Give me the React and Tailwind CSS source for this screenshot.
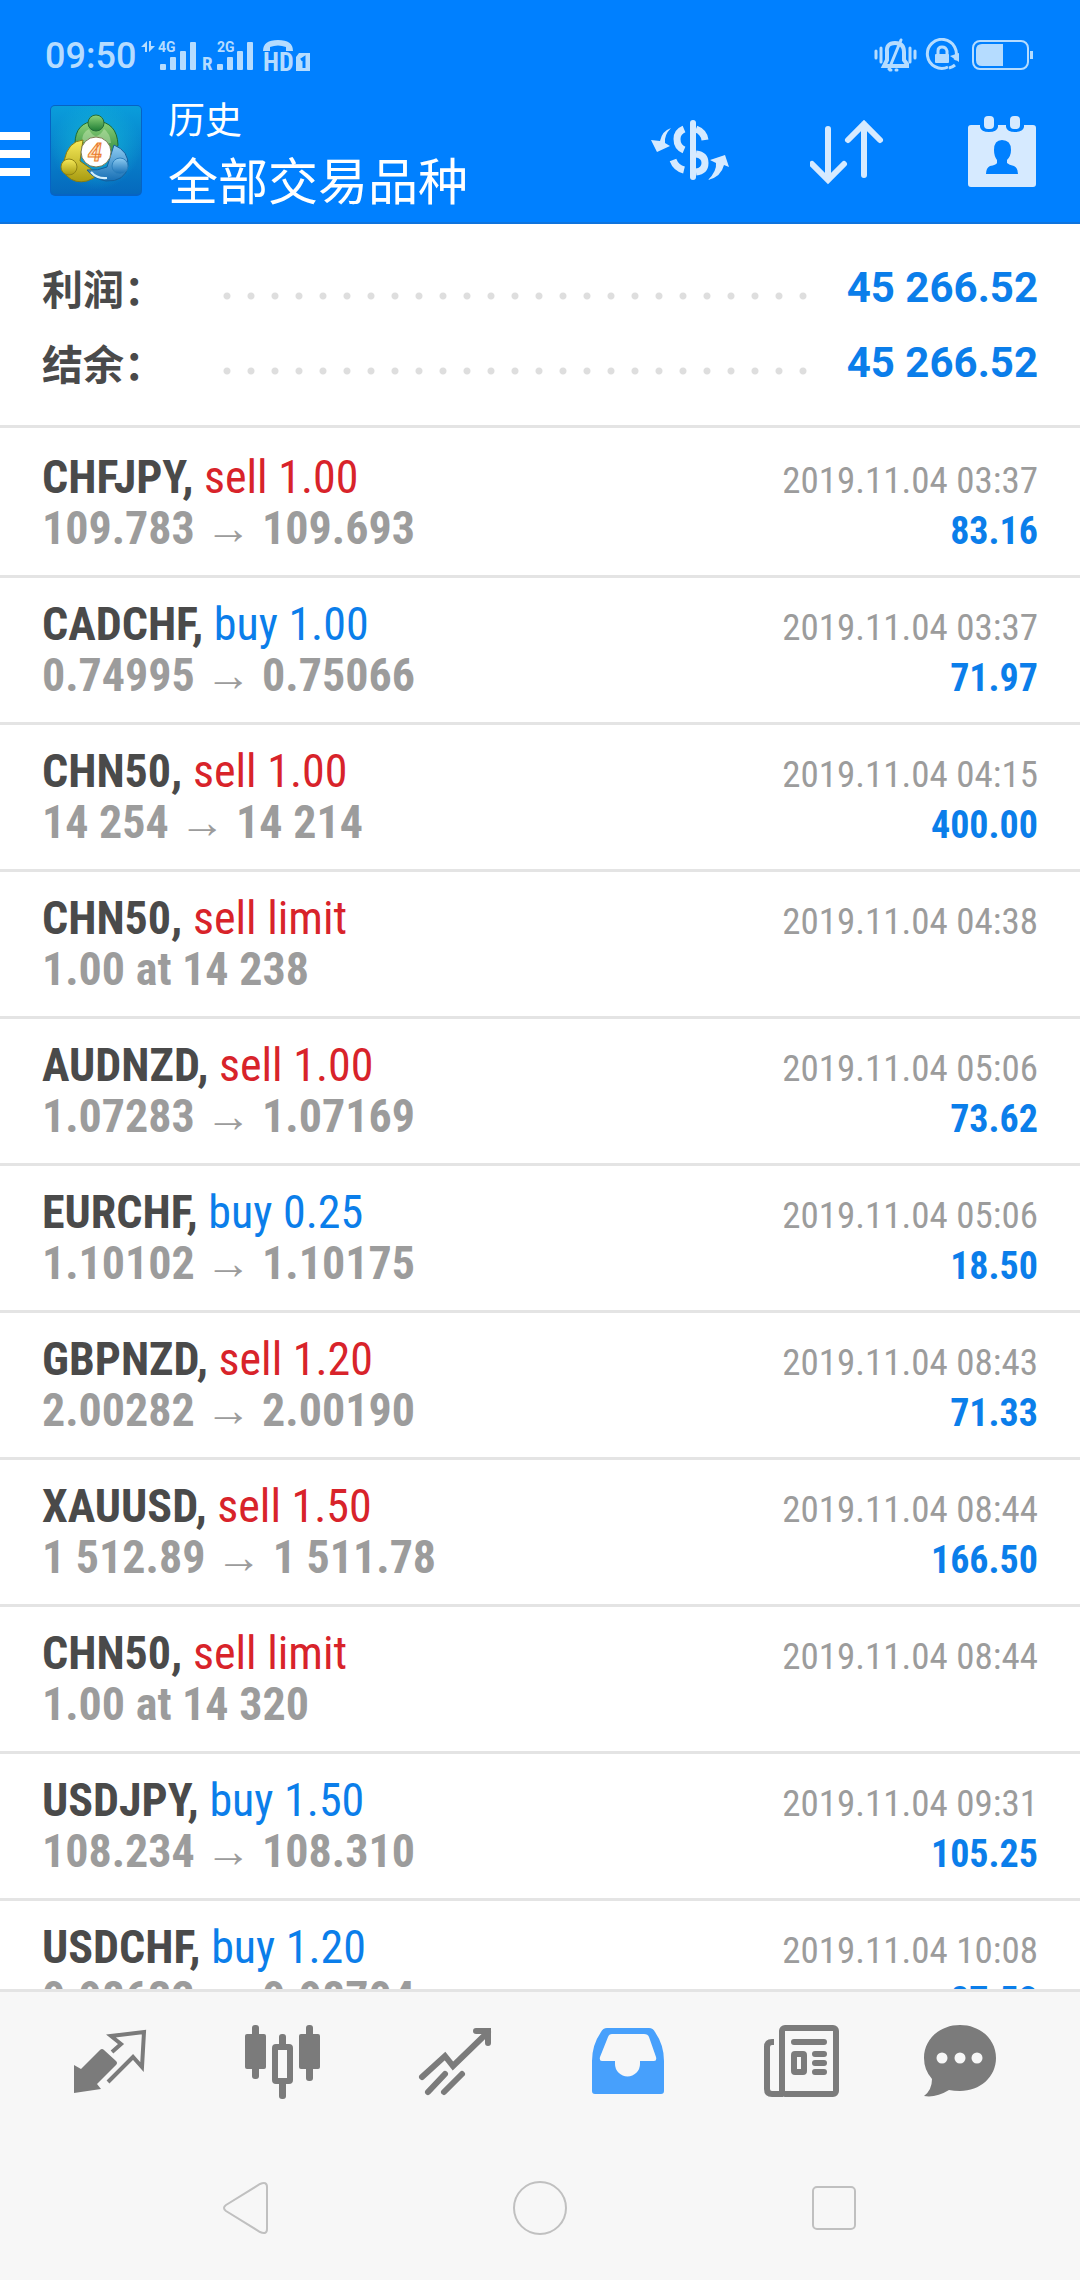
const trades = [
  { symbol: 'CHFJPY', side: 'sell', type: 'sell 1.00', from: '109.783', to: '109.693', time: '2019.11.04 03:37', profit: '83.16' },
  { symbol: 'CADCHF', side: 'buy', type: 'buy 1.00', from: '0.74995', to: '0.75066', time: '2019.11.04 03:37', profit: '71.97' },
  { symbol: 'CHN50', side: 'sell', type: 'sell 1.00', from: '14 254', to: '14 214', time: '2019.11.04 04:15', profit: '400.00' },
  { symbol: 'CHN50', side: 'sell', type: 'sell limit', order: '1.00 at 14 238', time: '2019.11.04 04:38' },
  { symbol: 'AUDNZD', side: 'sell', type: 'sell 1.00', from: '1.07283', to: '1.07169', time: '2019.11.04 05:06', profit: '73.62' },
  { symbol: 'EURCHF', side: 'buy', type: 'buy 0.25', from: '1.10102', to: '1.10175', time: '2019.11.04 05:06', profit: '18.50' },
  { symbol: 'GBPNZD', side: 'sell', type: 'sell 1.20', from: '2.00282', to: '2.00190', time: '2019.11.04 08:43', profit: '71.33' },
  { symbol: 'XAUUSD', side: 'sell', type: 'sell 1.50', from: '1 512.89', to: '1 511.78', time: '2019.11.04 08:44', profit: '166.50' },
  { symbol: 'CHN50', side: 'sell', type: 'sell limit', order: '1.00 at 14 320', time: '2019.11.04 08:44' },
  { symbol: 'USDJPY', side: 'buy', type: 'buy 1.50', from: '108.234', to: '108.310', time: '2019.11.04 09:31', profit: '105.25' },
  { symbol: 'USDCHF', side: 'buy', type: 'buy 1.20', from: '0.98632', to: '0.98704', time: '2019.11.04 10:08', profit: '87.53' },
]

const summary = [
  { label: '利润：', value: '45 266.52' },
  { label: '结余：', value: '45 266.52' },
]

/* ── Status bar ── */
function SignalIcons() {
  return (
    <svg className="w-[172px] h-[42px]" viewBox="0 -4 172 42" fill="currentColor" aria-hidden="true">
      <path d="M1 8l6-6v11h-2V8zM9 2v11l6-6h-4V2z" />
      <text x="18" y="13" fontFamily="Roboto" fontSize="14" fontWeight="700">4G</text>
      <rect x="20" y="25" width="6" height="6" rx="1" />
      <rect x="30" y="18" width="6" height="13" rx="1" />
      <rect x="40" y="12" width="6" height="19" rx="1" />
      <rect x="50" y="3" width="6" height="28" rx="1" />
      <text x="62" y="31" fontFamily="Roboto Condensed" fontSize="19" fontWeight="700">R</text>
      <text x="77" y="13" fontFamily="Roboto" fontSize="14" fontWeight="700">2G</text>
      <rect x="77" y="25" width="6" height="6" rx="1" />
      <rect x="87" y="18" width="6" height="13" rx="1" />
      <rect x="97" y="12" width="6" height="19" rx="1" />
      <rect x="107" y="3" width="6" height="28" rx="1" />
      <path d="M123 12Q123 1 138 1T153 12H146V8Q138 5 130 8V12Z" />
      <text x="123" y="32" fontFamily="Roboto Condensed" fontSize="26" fontWeight="700">HD</text>
      <path d="M159 14h11v18h-14V18z" />
      <path d="M161 21l3-2v10" fill="none" stroke="#0080ff" strokeWidth="3" />
    </svg>
  )
}

function DeviceIcons() {
  return (
    <svg className="w-[160px] h-[36px]" viewBox="0 0 160 36" fill="none" stroke="currentColor" aria-hidden="true">
      <g strokeWidth="3" strokeLinecap="round">
        <path d="M2 13v7M7 10v14M41 13v7M36 10v14" />
        <path d="M10 28H33V26L30 22V14Q30 5 21 5T13 14V22L10 28Z" strokeWidth="4" />
        <path d="M27 2L15 31M16 32h1M22 32h1" />
      </g>
      <path d="M74 29A14.500 14.500 0 1 1 81 22M81 27A14.500 14.500 0 0 1 75 30" strokeWidth="3" />
      <path d="M85 15v9l-9-6z" fill="currentColor" stroke="none" />
      <path d="M64 17V13Q64 9 68 9T73 13V17" strokeWidth="3" />
      <rect x="61" y="16" width="14" height="9" rx="1" fill="currentColor" stroke="none" />
      <rect x="99" y="3" width="55" height="28" rx="7" strokeWidth="2" />
      <path d="M108 6h21v22h-21q-6 0-6-6v-10q0-6 6-6z" fill="currentColor" stroke="none" />
      <rect x="156" y="13" width="3" height="8" fill="currentColor" stroke="none" />
    </svg>
  )
}

/* ── App bar ── */
function AppLogo() {
  return (
    <svg className="w-[92px] h-[92px] ml-5" viewBox="0 0 92 92" role="img" aria-label="MetaTrader 4">
      <defs>
        <linearGradient id="tile" x1="0" y1="0" x2="0" y2="1">
          <stop offset="0" stopColor="#0a9ddb" />
          <stop offset="1" stopColor="#0569bd" />
        </linearGradient>
        <radialGradient id="tileGlow" cx="0.5" cy="0.45" r="0.5">
          <stop offset="0" stopColor="#13b4d6" />
          <stop offset="1" stopColor="#13b4d6" stopOpacity="0" />
        </radialGradient>
        <linearGradient id="green" x1="0" y1="0" x2="0" y2="1">
          <stop offset="0" stopColor="#8fd47a" />
          <stop offset="1" stopColor="#1f7d35" />
        </linearGradient>
        <linearGradient id="yellow" x1="0" y1="0" x2="0" y2="1">
          <stop offset="0" stopColor="#f6ea5a" />
          <stop offset="1" stopColor="#a89b10" />
        </linearGradient>
        <linearGradient id="blue" x1="0" y1="0" x2="0" y2="1">
          <stop offset="0" stopColor="#8fcdf2" />
          <stop offset="1" stopColor="#176fb5" />
        </linearGradient>
      </defs>
      <rect y="1" width="92" height="91" rx="5" fill="#0663c4" />
      <rect x="1" y="2" width="90" height="88" rx="4" fill="url(#tile)" />
      <rect x="1" y="2" width="90" height="88" rx="4" fill="url(#tileGlow)" />
      <g strokeWidth="1" strokeLinejoin="round">
        <path d="M25 40Q25 18 46 17Q67 18 68 41Q67 50 60 57L46 43L27 46Z" fill="url(#green)" stroke="#1f6b30" />
        <path d="M32 38Q32 28 39 25Q42 32 46 32T54 25Q60 29 61 39Z" fill="#d9f1c4" stroke="none" opacity="0.4" />
        <path d="M33 36Q18 37 14 57Q12 67 17 72Q25 80 37 77Q44 75 48 70L30 57Z" fill="url(#yellow)" stroke="#877b10" />
        <path d="M64 41Q79 47 78 62Q75 78 56 77Q44 75 37 66Q48 67 57 63Z" fill="url(#blue)" stroke="#135f9d" />
        <path d="M41 68Q47 75 57 74" fill="none" stroke="#d3effc" strokeWidth="2" />
        <circle cx="19" cy="63" r="8" fill="url(#yellow)" stroke="#8f8313" />
        <circle cx="70" cy="62" r="8" fill="url(#blue)" stroke="#2c80bd" />
        <circle cx="46" cy="19" r="8" fill="url(#green)" stroke="#246c39" />
      </g>
      <circle cx="46" cy="48" r="15" fill="#fff" stroke="#7b7a52" strokeWidth="1" />
      <text x="45" y="57" textAnchor="middle" fontFamily="Roboto" fontSize="25" fontWeight="700" fontStyle="italic" fill="#ffe2b8" stroke="#ea7a2c" strokeWidth="1">4</text>
    </svg>
  )
}

function MenuIcon() {
  return (
    <svg className="w-[30px] h-[52px]" viewBox="0 0 30 52" fill="currentColor" aria-hidden="true">
      <path d="M0 8h30v8H0zM0 26h30v8H0zM0 44h30v8H0z" />
    </svg>
  )
}

function CurrencyIcon() {
  return (
    <svg className="w-20 h-[72px]" viewBox="0 0 80 72" fill="none" stroke="currentColor" aria-hidden="true">
      <path d="M42 9V63" strokeWidth="6" strokeLinecap="round" />
      <path d="M33 15Q26 18 26 25Q26 33 33 36M22 46Q25 54 33 56M45 15Q53 18 54 26M45 40Q54 41 54 49T45 58" strokeWidth="7" />
      <path d="M20 14Q11 17 9 27L0 26L6 38L19 32L14 29Q13 21 20 14Z" fill="currentColor" stroke="none" />
      <path d="M57 66Q70 63 73 51L78 53L74 41L59 46L65 49Q66 57 57 66Z" fill="currentColor" stroke="none" />
    </svg>
  )
}

function SortIcon() {
  return (
    <svg className="w-[76px] h-[72px]" viewBox="0 0 76 72" fill="none" stroke="currentColor" strokeWidth="6" strokeLinecap="round" aria-hidden="true">
      <path d="M18 15V64M2 50L18 66L34 50" />
      <path d="M54 61V10M38 26L54 10L70 26" />
    </svg>
  )
}

function CalendarIcon() {
  return (
    <svg className="w-[74px] h-[76px]" viewBox="0 0 74 76" fill="currentColor" aria-hidden="true">
      <path d="M6 13H15V15Q16 20 24 20T33 15V13H41V15Q42 20 50 20T59 15V13H68Q71 13 71 16V72Q71 75 68 75H6Q3 75 3 72V16Q3 13 6 13Z" />
      <rect x="19" y="4" width="10" height="13" rx="4" />
      <rect x="45" y="4" width="10" height="13" rx="4" />
      <path d="M37 28Q46 28 46 38Q46 44 42 48V51Q44 53 49 54Q53 56 53 62H21Q21 56 25 54Q31 53 32 51V48Q29 44 29 38Q29 28 37 28Z" fill="#0080ff" />
    </svg>
  )
}

function Header() {
  return (
    <header className="bg-[#0080ff] border-b-2 border-[#0f74dd] text-white">
      <div className="flex items-center justify-between pt-[34px] pl-[45px] pr-[46px] text-[#b5dcff]">
        <div className="flex items-center gap-1">
          <span className="text-[36px] leading-[44px] font-medium">09:50</span>
          <SignalIcons />
        </div>
        <DeviceIcons />
      </div>
      <div className="flex items-center h-36 pr-[41px]">
        <button type="button" aria-label="Menu"><MenuIcon /></button>
        <AppLogo />
        <h1 className="flex flex-col ml-[26px] pt-[18px] font-normal">
          <span className="text-[37px] leading-[48px]">历史</span>
          <span className="text-[50px] leading-[74px]">全部交易品种</span>
        </h1>
        <div className="flex items-center gap-[79px] ml-auto text-[#d6eaff]">
          <button type="button" aria-label="Currency"><CurrencyIcon /></button>
          <button type="button" aria-label="Sort"><SortIcon /></button>
          <button type="button" aria-label="Period"><CalendarIcon /></button>
        </div>
      </div>
    </header>
  )
}

/* ── Totals ── */
function Summary() {
  return (
    <dl className="pt-[26px] pb-[25px] px-[42px] border-b-3 border-[#e4e4e4]">
      {summary.map((row) => (
        <div key={row.label} className="flex items-center h-[75px]">
          <dt className="w-[173px] font-['Noto_Sans_CJK_SC',sans-serif] text-[41px] font-bold text-[#4a4a4a]">{row.label}</dt>
          <dd className="flex flex-1 items-center">
            <span className="flex-1 h-2 mt-4 mr-[34px] bg-[radial-gradient(circle,#dedede_3px,transparent_4px)] bg-[length:24px_8px]" />
            <span className="text-[42px] font-bold text-[#0b7eea]">{row.value}</span>
          </dd>
        </div>
      ))}
    </dl>
  )
}

/* ── Single history entry ── */
function TradeRow({ trade }) {
  return (
    <li className="py-[21px] px-[42px] border-b-3 border-[#e4e4e4] font-['Roboto_Condensed','Liberation_Serif',serif] text-[46px] leading-[51px]">
      <div className="flex items-baseline justify-between">
        <p>
          <span className="font-bold text-[#4a4a4a]">{trade.symbol}, </span>
          <span className={trade.side === 'sell' ? 'text-[#d8232a]' : 'text-[#0b7eea]'}>{trade.type}</span>
        </p>
        <time className="text-[37px] leading-none text-[#9c9c9c]">{trade.time}</time>
      </div>
      <div className="flex items-baseline justify-between font-bold">
        {trade.order ? (
          <p className="text-[#9c9c9c]">{trade.order}</p>
        ) : (
          <p className="text-[#9c9c9c]">
            {trade.from} <span className="leading-none">→</span> {trade.to}
          </p>
        )}
        {trade.profit && <p className="text-[38px] leading-none text-[#0b7eea]">{trade.profit}</p>}
      </div>
    </li>
  )
}

/* ── Bottom tabs ── */
function QuotesIcon() {
  return (
    <svg className="size-[76px]" viewBox="0 0 76 76" fill="none" stroke="currentColor" strokeWidth="4" aria-hidden="true">
      <path d="M2 42L9 46L28 27Q30 25 32 27L44 38Q46 40 44 42L25 61L29 66L2 70Z" fill="currentColor" stroke="none" />
      <path d="M40 29L49 21L39 13L72 9L70 44L61 34L36 59" />
    </svg>
  )
}

function ChartsIcon() {
  return (
    <svg className="size-[76px]" viewBox="0 0 76 76" fill="currentColor" aria-hidden="true">
      <rect x="0" y="11" width="21" height="35" rx="2" />
      <rect x="7" y="2" width="7" height="54" rx="3" />
      <rect x="54" y="11" width="21" height="35" rx="2" />
      <rect x="61" y="2" width="7" height="56" rx="3" />
      <rect x="34" y="11" width="7" height="16" rx="3" />
      <rect x="34" y="57" width="7" height="19" rx="3" />
      <rect x="30" y="24" width="15" height="34" rx="1" fill="none" stroke="currentColor" strokeWidth="6" />
    </svg>
  )
}

function TradeIcon() {
  return (
    <svg className="size-[76px]" viewBox="0 0 76 76" fill="none" stroke="currentColor" strokeWidth="6" strokeLinecap="round" aria-hidden="true">
      <path d="M4 54L27 33L35 43L70 9" />
      <path d="M58 8H70V20" />
      <path d="M27 51L10 69M44 51L26 69" />
    </svg>
  )
}

function HistoryIcon() {
  return (
    <svg className="size-[76px]" viewBox="0 0 76 76" fill="currentColor" fillRule="evenodd" aria-hidden="true">
      <path d="M17 5H59Q63 5 65 9Q74 22 74 38V68Q74 71 71 71H5Q2 71 2 68V38Q2 22 11 9Q13 5 17 5ZM22 11Q19 11 18 14L10 34Q9 38 12 38H25V41A12.500 12.500 0 0 0 50 41V38H64Q67 38 66 34L59 14Q58 11 54 11Z" />
    </svg>
  )
}

function NewsIcon() {
  return (
    <svg className="size-[76px]" viewBox="0 0 76 76" fill="none" stroke="currentColor" strokeWidth="6" aria-hidden="true">
      <rect x="19" y="5" width="54" height="66" rx="3" />
      <path d="M11 19H9Q4 19 4 24V66Q4 71 9 71H20" />
      <path d="M31 19H61M52 31H61M52 40H61M52 49H61" strokeLinecap="round" />
      <rect x="31" y="31" width="10" height="18" rx="1" />
    </svg>
  )
}

function ChatIcon() {
  return (
    <svg className="size-[76px]" viewBox="0 0 76 76" fill="currentColor" aria-hidden="true">
      <path d="M38 2C58 2 74 16 74 35S58 68 38 68Q32 68 27 67Q14 75 2 73Q10 67 10 56Q2 47 2 35C2 16 18 2 38 2Z" />
      <g fill="#f7f7f7">
        <circle cx="20" cy="35" r="5.500" />
        <circle cx="38" cy="35" r="5.500" />
        <circle cx="55" cy="35" r="5.500" />
      </g>
    </svg>
  )
}

const tabs = [
  { label: 'Quotes', Icon: QuotesIcon },
  { label: 'Charts', Icon: ChartsIcon },
  { label: 'Trade', Icon: TradeIcon },
  { label: 'History', Icon: HistoryIcon, active: true },
  { label: 'News', Icon: NewsIcon },
  { label: 'Messages', Icon: ChatIcon },
]

function TabBar() {
  return (
    <nav className="grid grid-cols-[repeat(5,43fr)_36fr] pl-6 pr-12 py-[31px]">
      {tabs.map(({ label, Icon, active }) => (
        <button
          key={label}
          type="button"
          aria-label={label}
          className={active ? 'flex justify-center text-[#47a0fc]' : 'flex justify-center text-[#7b7b7b]'}
        >
          <Icon />
        </button>
      ))}
    </nav>
  )
}

function SystemNav() {
  return (
    <div className="grid grid-cols-3 px-[99px] pt-[50px] pb-11 text-[#c0c0c0]">
      <button type="button" aria-label="Back" className="flex justify-center">
        <svg className="size-14" viewBox="0 0 56 56" fill="none" stroke="currentColor" strokeWidth="2">
          <path d="M8 25L42 4Q49 1 49 7V49Q49 55 42 52L8 31Q4 28 8 25Z" />
        </svg>
      </button>
      <button type="button" aria-label="Home" className="flex justify-center">
        <svg className="size-14" viewBox="0 0 56 56" fill="none" stroke="currentColor" strokeWidth="2">
          <circle cx="28" cy="28" r="26" />
        </svg>
      </button>
      <button type="button" aria-label="Recent apps" className="flex justify-center">
        <svg className="size-14" viewBox="0 0 56 56" fill="none" stroke="currentColor" strokeWidth="2">
          <rect x="7" y="7" width="42" height="42" rx="4" />
        </svg>
      </button>
    </div>
  )
}

export default function App() {
  return (
    <div className="flex flex-col h-screen bg-white font-[Roboto,'Noto_Sans_CJK_SC',sans-serif]">
      <Header />
      <main className="flex flex-col flex-1 min-h-0">
        <Summary />
        <ul className="flex-1 min-h-0 overflow-hidden pt-[3px]">
          {trades.map((trade) => (
            <TradeRow key={`${trade.symbol}-${trade.time}`} trade={trade} />
          ))}
        </ul>
      </main>
      <footer className="bg-[#f7f7f7] border-t-3 border-[#e4e4e4]">
        <TabBar />
        <SystemNav />
      </footer>
    </div>
  )
}
